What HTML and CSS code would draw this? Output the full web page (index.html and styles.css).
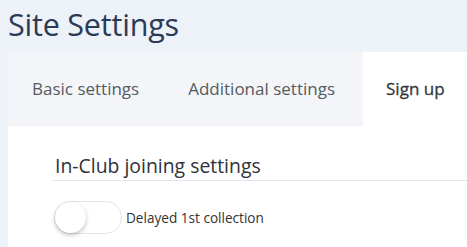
FILE: index.html
```html
<!DOCTYPE html>
<html>
<head>
<meta charset="utf-8">
<link rel="stylesheet" href="styles.css">
</head>
<body>
<h1 class="page-title">Site Settings</h1>
<div class="panel">
  <div class="tabs">
    <div class="tab">Basic settings</div>
    <div class="tab tab-last">Additional settings</div>
    <div class="tab active">Sign up</div>
  </div>
  <div class="content">
    <h2 class="section-title">In-Club joining settings</h2>
    <div class="row">
      <span class="toggle"><span class="knob"></span></span>
      <span class="label">Delayed 1st collection</span>
    </div>
  </div>
</div>
</body>
</html>
```
FILE: styles.css
```css
html, body { margin: 0; padding: 0; }
body {
  background: #edf1f8;
  font-family: "Open Sans", "Noto Sans", sans-serif;
  width: 467px;
  height: 247px;
  overflow: hidden;
}
.page-title {
  margin: 0;
  padding: 3px 0 0 8px;
  height: 52px;
  box-sizing: border-box;
  font-size: 30.5px;
  font-weight: 400;
  color: #2b3b55;
  letter-spacing: -0.2px;
}
.panel {
  margin-left: 8px;
  background: #fff;
  height: 200px;
}
.tabs {
  display: flex;
  background: #f3f5f9;
  height: 74px;
}
.tab {
  padding: 0 25px 0 24px;
  line-height: 74px;
  font-size: 17px;
  color: #555a60;
  white-space: nowrap;
  flex-shrink: 0;
}
.tab.tab-last {
  padding-right: 28px;
}
.tab.active {
  background: #fff;
  color: #35383d;
  -webkit-text-stroke: 0.3px #35383d;
  flex: 1 0 auto;
  padding-left: 23px;
  padding-right: 0;
}
.content {
  padding: 25px 0 0 45px;
}
.section-title {
  margin: 0;
  font-size: 19.4px;
  font-weight: 400;
  color: #2f3238;
  padding: 0 0 0 2px;
  border-bottom: 1px solid #e2e5ea;
  height: 29px;
  line-height: 29px;
}
.row {
  display: flex;
  align-items: center;
  gap: 4px;
  margin-top: 20px;
  margin-left: 1px;
}
.toggle {
  width: 66px;
  height: 31px;
  border: 1px solid #e3e5e8;
  border-radius: 17px;
  background: #fff;
  position: relative;
  display: block;
}
.knob {
  position: absolute;
  left: 0;
  top: 0;
  width: 31px;
  height: 31px;
  border-radius: 50%;
  background: #fff;
  box-shadow: 0 2px 4px rgba(0,0,0,0.25);
}
.label {
  font-size: 13.6px;
  color: #333;
}
```
